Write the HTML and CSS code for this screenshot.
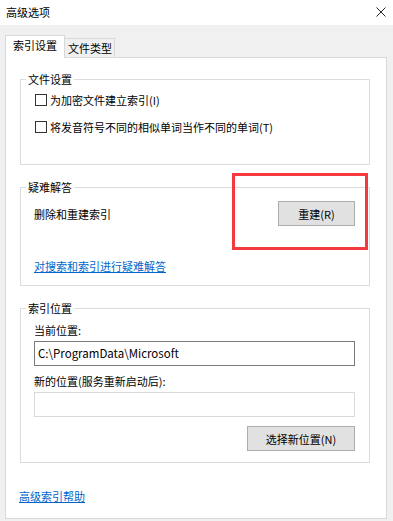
FILE: index.html
```html
<!DOCTYPE html>
<html lang="zh-CN">
<head>
	<meta charset="UTF-8">
	<meta name="viewport" content="width=device-width, initial-scale=1.0">
	<title>高级选项</title>
	<link rel="stylesheet" href="styles.css">
</head>
<body>
	<div class="dialog">
		<div class="title_bar">
			<span class="title">高级选项</span>
			<svg class="close_btn" width="10" height="10" viewBox="0 0 10 10">
				<path d="M0.5 0.5 L9.5 9.5 M9.5 0.5 L0.5 9.5" stroke="#222" stroke-width="1" fill="none"/>
			</svg>
		</div>

		<div class="dialog_body">
			<div class="tabs">
				<div class="tab active">索引设置</div>
				<div class="tab">文件类型</div>
			</div>

			<div class="tab_panel">
				<fieldset class="group group_files">
					<legend>文件设置</legend>
					<label class="check_row"><span class="check_box"></span>为加密文件建立索引(I)</label>
					<label class="check_row"><span class="check_box"></span>将发音符号不同的相似单词当作不同的单词(T)</label>
				</fieldset>

				<fieldset class="group group_trouble">
					<legend>疑难解答</legend>
					<div class="rebuild_row">
						<span>删除和重建索引</span>
						<div class="rebuild_wrap">
							<button class="win_btn rebuild_btn">重建(R)</button>
							<!-- 截图上的红框标注 -->
							<span class="mark"></span>
						</div>
					</div>
					<a href="#" class="link trouble_link">对搜索和索引进行疑难解答</a>
				</fieldset>

				<fieldset class="group group_location">
					<legend>索引位置</legend>
					<div class="field_label">当前位置:</div>
					<div class="text_box current">C:\ProgramData\Microsoft</div>
					<div class="field_label">新的位置(服务重新启动后):</div>
					<div class="text_box disabled"></div>
					<div class="btn_row">
						<button class="win_btn select_btn">选择新位置(N)</button>
					</div>
				</fieldset>

				<a href="#" class="link help_link">高级索引帮助</a>
			</div>
		</div>
	</div>
</body>
</html>
```

FILE: styles.css
```css
*{
	box-sizing: border-box;
}
html, body{
	margin: 0;
	padding: 0;
}
body{
	width: 393px;
	height: 521px;
	overflow: hidden;
	font-family: "Noto Sans CJK SC", "Noto Sans", sans-serif;
	font-size: 11px;
	line-height: 14px;
	color: #000;
	background: #f0f0f0;
}
.dialog{
	display: flex;
	flex-direction: column;
	height: 521px;
}
.title_bar{
	height: 25px;
	background: #fff;
	display: flex;
	align-items: center;
	justify-content: space-between;
	padding: 0 6px 1px 6px;
}
.close_btn{
	margin-right: 1px;
}
.dialog_body{
	flex: 1;
	display: flex;
	flex-direction: column;
	padding: 10px 6px 2px 5px;
}

/* tabs */
.tabs{
	display: flex;
	align-items: flex-end;
	height: 22px;
	position: relative;
	z-index: 1;
}
.tab{
	height: 19px;
	padding: 0 2px 0 3px;
	border: solid 1px #d9d9d9;
	border-bottom: none;
	border-left: none;
	background: #f0f0f0;
	line-height: 18px;
}
.tab.active{
	height: 23px;
	margin-bottom: -1px;
	padding: 0 7px 0 7px;
	border-left: solid 1px #d9d9d9;
	border-right: solid 1px #d9d9d9;
	background: #fff;
	line-height: 19px;
}
.tab_panel{
	flex: 1;
	background: #fff;
	border: solid 1px #d9d9d9;
	padding: 14px 16px 0 14px;
}

/* group boxes */
.group{
	margin: 0;
	border: solid 1px #dcdcdc;
	padding: 4px 14px 0 13px;
	min-width: 0;
}
.group legend{
	padding: 0 2px;
	margin-left: -8px;
	line-height: 14px;
}
.group_files{
	padding-top: 4px;
	padding-bottom: 27px;
}
.group_trouble{
	margin-top: 15px;
	padding-top: 7px;
	padding-bottom: 12px;
}
.group_location{
	margin-top: 15px;
	padding-top: 8px;
	padding-bottom: 11px;
}

.check_row{
	display: flex;
	align-items: center;
	height: 20px;
	padding-left: 1px;
}
.check_row + .check_row{
	margin-top: 7px;
}
.check_box{
	width: 12px;
	height: 12px;
	border: solid 1px #333;
	background: #fff;
	margin-right: 3px;
}

.rebuild_row{
	display: flex;
	justify-content: space-between;
	align-items: center;
	height: 25px;
}
.rebuild_wrap{
	position: relative;
}
.mark{
	position: absolute;
	left: -46px;
	right: -13px;
	top: -28px;
	bottom: -24px;
	border: solid 3px #f5393e;
}

.win_btn{
	font: inherit;
	color: #000;
	background: #e1e1e1;
	border: solid 1px #adadad;
	height: 25px;
	padding: 0;
}
.rebuild_btn{
	width: 77px;
}
.select_btn{
	width: 108px;
}

.link{
	color: #0066cc;
	text-decoration: underline;
	display: inline-block;
}
.trouble_link{
	margin-top: 33px;
}

.field_label{
	line-height: 14px;
}
.text_box{
	height: 25px;
	margin: 4px 0 8px;
	padding: 0 3px;
	line-height: 23px;
	background: #fff;
}
.text_box.current{
	border: solid 1px #7a7a7a;
	font-size: 11.5px;
}
.text_box.disabled{
	border: solid 1px #d9d9d9;
	margin-bottom: 9px;
}
.btn_row{
	display: flex;
	justify-content: flex-end;
}

.help_link{
	margin-top: 26px;
	margin-left: -1px;
}
```
